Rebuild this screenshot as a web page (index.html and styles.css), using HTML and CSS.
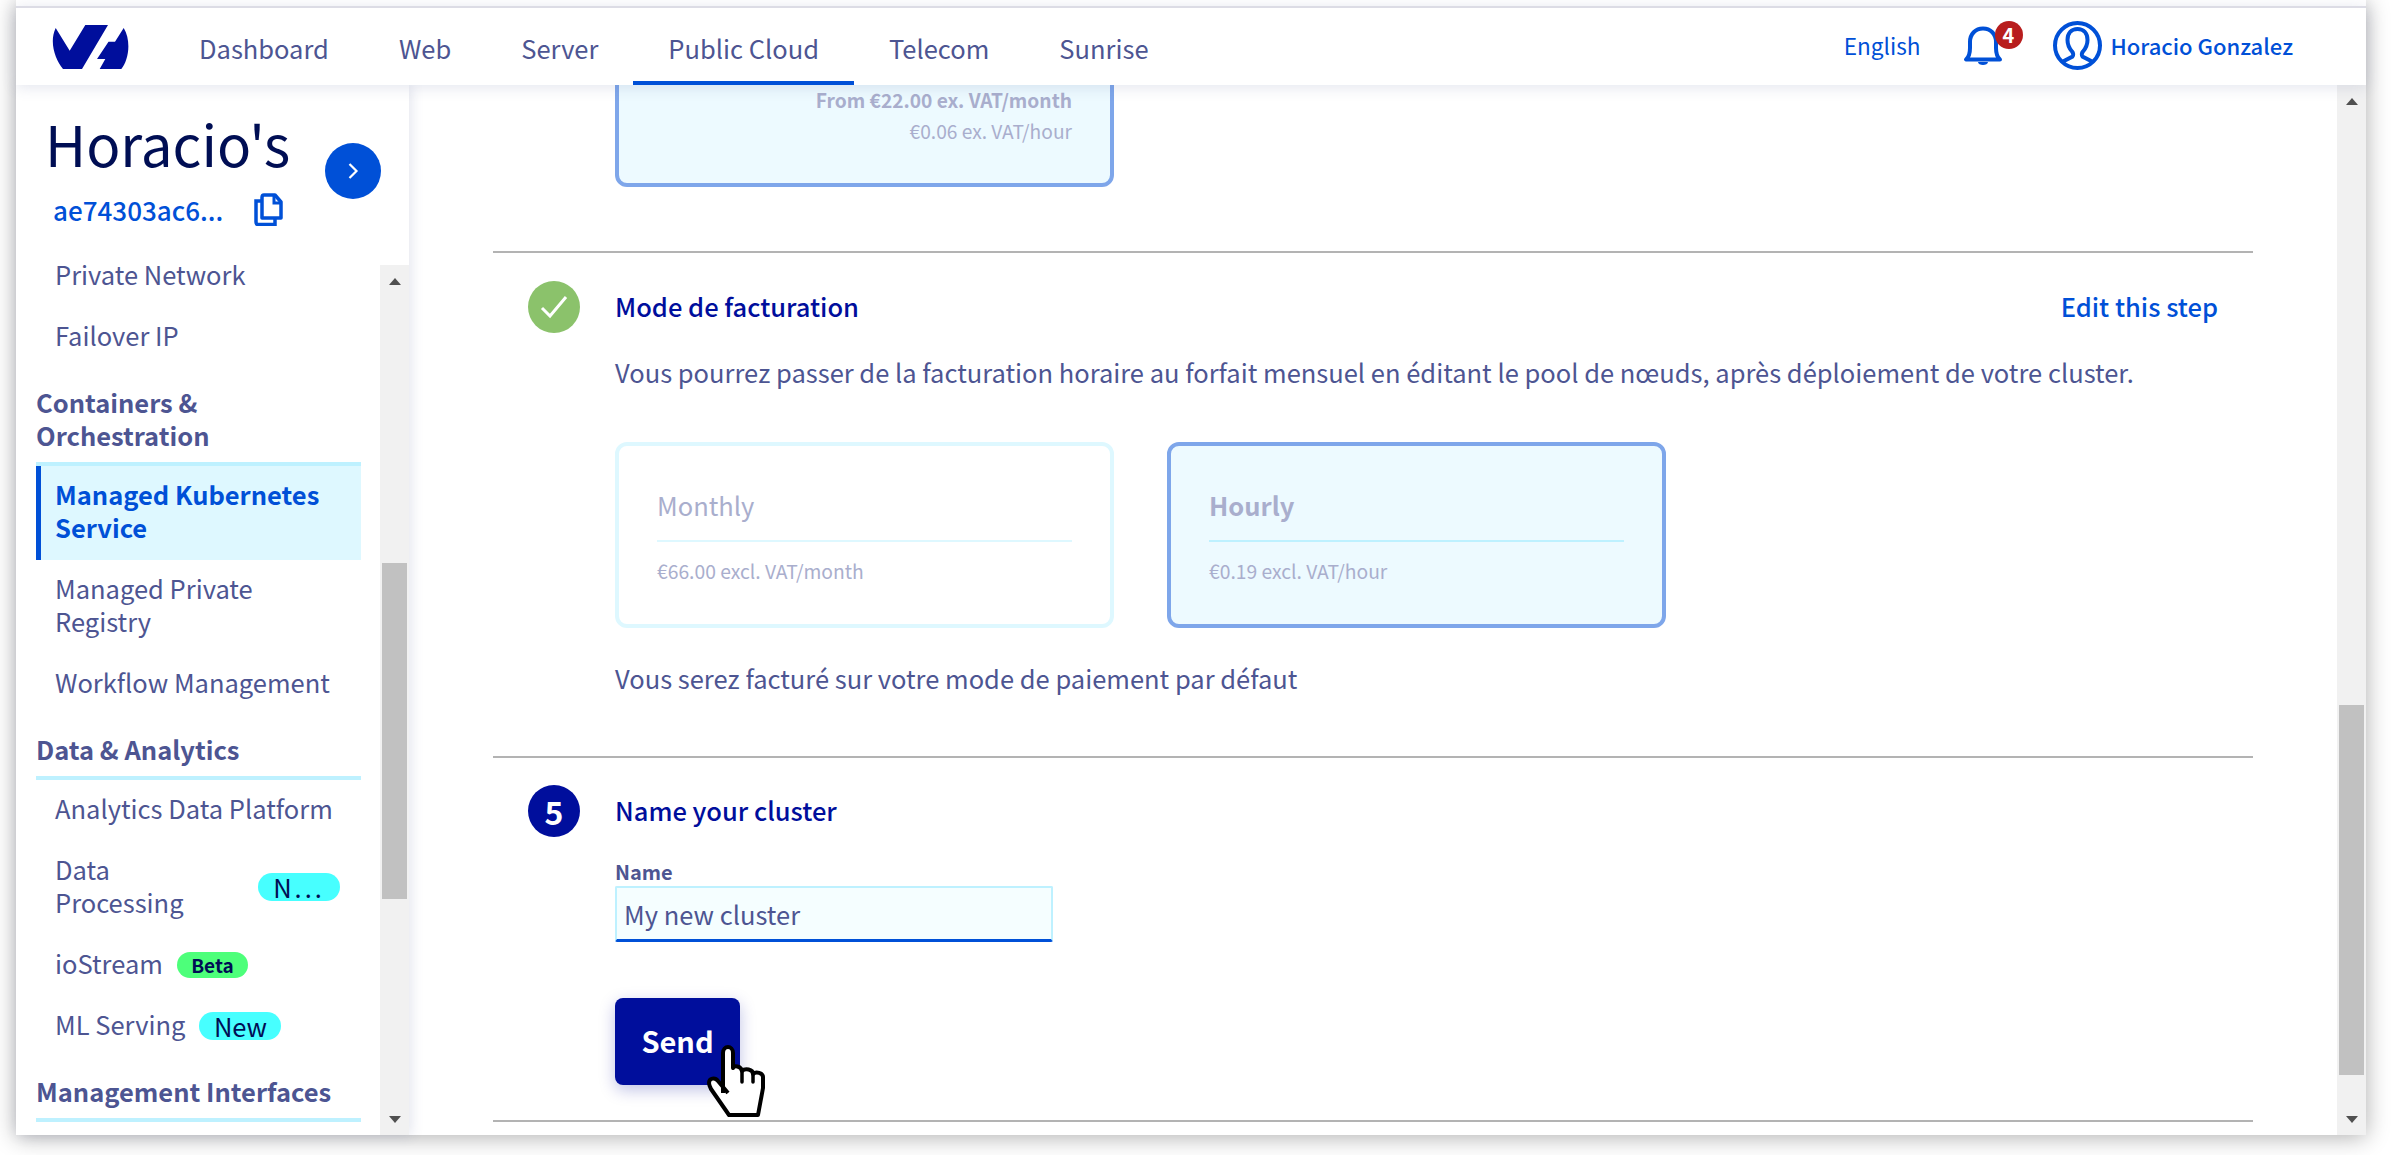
FILE: index.html
```html
<!DOCTYPE html>
<html lang="en">
<head>
    <meta charset="UTF-8">
    <meta name="viewport" content="width=device-width, initial-scale=1.0">
    <title>Public Cloud - Name your cluster</title>
    <link rel="stylesheet" href="styles.css">
</head>
<body>
    <div class="window">
        <nav class="topnav">
            <a class="logo" href="#">
                <svg width="77" height="44" viewBox="0 0 77 44"><path d="M3.7 3L17.7 25.7L33.3 0H56L30 44H11C3 34-3 17 3.7 3Z" fill="#000e9c"/><path d="M71.7 3L63 16.7H56.5L45 34H53.3L47.7 44H69.3C76 36 80 17 71.7 3Z" fill="#000e9c"/></svg>
            </a>
            <a class="nav-link" href="#">Dashboard</a>
            <a class="nav-link" href="#">Web</a>
            <a class="nav-link" href="#">Server</a>
            <a class="nav-link active" href="#">Public Cloud</a>
            <a class="nav-link" href="#">Telecom</a>
            <a class="nav-link" href="#">Sunrise</a>
            <div class="nav-right">
                <a class="lang" href="#">English</a>
                <a class="bell" href="#">
                    <svg width="40" height="40" viewBox="0 0 40 40"><path d="M3 33.5H37C34 31 33 28 33 22V16C33 8 27.500 2.500 20 2.500S7 8 7 16V22C7 28 6 31 3 33.500Z" fill="none" stroke="#0050d7" stroke-width="4" stroke-linejoin="round"/><path d="M15 36H25C25 40 15 40 15 36Z" fill="#0050d7"/></svg>
                    <span class="bell-count">4</span>
                </a>
                <a class="user" href="#">
                    <svg width="49" height="49" viewBox="0 0 49 49"><circle cx="24.500" cy="24.500" r="22.500" fill="none" stroke="#0050d7" stroke-width="4"/><path d="M9 41L19.500 35.500C20.500 34.500 20.500 32 19 30.500C16 27 14.500 23.500 14.500 19C14.500 12 18.500 8 24.500 8S34.500 12 34.500 19C34.500 23.500 33 27 30 30.500C28.500 32 28.500 34.500 29.500 35.500L40 41" fill="none" stroke="#0050d7" stroke-width="4"/></svg>
                    <span>Horacio Gonzalez</span>
                </a>
            </div>
        </nav>

        <div class="page">
            <aside class="sidebar">
                <div class="project">
                    <div class="project-info">
                        <h1>Horacio's</h1>
                        <div class="project-id">
                            <span>ae74303ac6...</span>
                            <svg width="30" height="33" viewBox="0 0 30 33"><path d="M8 4.500V25H27V9L21 2H10C9 2 8 3 8 4.500Z" fill="none" stroke="#0050d7" stroke-width="3.500" stroke-linejoin="round"/><path d="M20 2V10H27" fill="none" stroke="#0050d7" stroke-width="3"/><path d="M8 8H2V29C2 30.500 3 31.500 4 31.500H21V25" fill="none" stroke="#0050d7" stroke-width="3.500"/></svg>
                        </div>
                    </div>
                    <a class="project-toggle" href="#">
                        <svg width="14" height="20" viewBox="0 0 14 20"><path d="M3.500 3L10.500 10L3.500 17" fill="none" stroke="#fff" stroke-width="2.200"/></svg>
                    </a>
                </div>
                <div class="side-body">
                    <div class="side-menu">
                        <a class="side-item" href="#">Private Network</a>
                        <a class="side-item" href="#">Failover IP</a>
                        <h3 class="side-title">Containers &amp; Orchestration</h3>
                        <a class="side-item current" href="#">Managed Kubernetes Service</a>
                        <a class="side-item" href="#">Managed Private Registry</a>
                        <a class="side-item" href="#">Workflow Management</a>
                        <h3 class="side-title">Data &amp; Analytics</h3>
                        <a class="side-item" href="#">Analytics Data Platform</a>
                        <a class="side-item with-badge" href="#"><span class="wrap-name">Data Processing</span><span class="badge new wide">N...</span></a>
                        <a class="side-item with-badge" href="#"><span>ioStream</span><span class="badge beta">Beta</span></a>
                        <a class="side-item with-badge" href="#"><span>ML Serving</span><span class="badge new">New</span></a>
                        <h3 class="side-title">Management Interfaces</h3>
                    </div>
                    <div class="scrollbar">
                        <span class="arrow-up"></span>
                        <span class="thumb side-thumb"></span>
                        <span class="arrow-down"></span>
                    </div>
                </div>
            </aside>

            <main class="content">
                <div class="steps">
                    <div class="plan selected top-plan">
                        <p class="plan-strong">From €22.00 ex. VAT/month</p>
                        <p class="plan-small">€0.06 ex. VAT/hour</p>
                    </div>

                    <section class="step first-step">
                        <div class="step-head">
                            <span class="step-icon done">
                                <svg width="30" height="26" viewBox="0 0 30 26"><path d="M3 14L11 22L27 3" fill="none" stroke="#fff" stroke-width="3"/></svg>
                            </span>
                            <h2>Mode de facturation</h2>
                            <a class="edit" href="#">Edit this step</a>
                        </div>
                        <div class="step-body">
                            <p class="desc">Vous pourrez passer de la facturation horaire au forfait mensuel en éditant le pool de nœuds, après déploiement de votre cluster.</p>
                            <div class="plans">
                                <div class="plan">
                                    <h4>Monthly</h4>
                                    <p class="price">€66.00 excl. VAT/month</p>
                                </div>
                                <div class="plan selected">
                                    <h4>Hourly</h4>
                                    <p class="price">€0.19 excl. VAT/hour</p>
                                </div>
                            </div>
                            <p class="desc note">Vous serez facturé sur votre mode de paiement par défaut</p>
                        </div>
                    </section>

                    <section class="step last-step">
                        <div class="step-head">
                            <span class="step-icon num">5</span>
                            <h2>Name your cluster</h2>
                        </div>
                        <div class="step-body">
                            <label class="field-label" for="clusterName">Name</label>
                            <input class="field" id="clusterName" type="text" value="My new cluster">
                            <div class="send-wrap">
                                <button class="send">Send</button>
                                <svg class="hand" width="60" height="74" viewBox="0 0 60 74"><path d="M22 49L12 37C9 33 3 34 3 39C3 41 4 43 5 45L23 71H52L57 44V33C57 29 50 27 47 30C47 25 39 24 36 27C35 22 28 21 27 24V9C27 1 17 1 17 9V49" fill="#fff" stroke="#000" stroke-width="4" stroke-linejoin="round"/><path d="M36 27V38M47 30V38" fill="none" stroke="#000" stroke-width="3.500" stroke-linecap="round"/></svg>
                            </div>
                        </div>
                    </section>
                </div>
                <div class="scrollbar">
                    <span class="arrow-up"></span>
                    <span class="thumb main-thumb"></span>
                    <span class="arrow-down"></span>
                </div>
            </main>
        </div>
    </div>
</body>
</html>
```

FILE: styles.css
```css
* {
    box-sizing: border-box;
}
html, body {
    height: 100%;
}
body {
    margin: 0;
    background: #fff;
    font-family: "Noto Sans CJK SC", "Noto Sans", sans-serif;
    font-size: 25.5px;
    line-height: 33px;
    color: #4d5592;
    overflow: hidden;
}
a {
    text-decoration: none;
    color: inherit;
}
h1, h2, h3, h4, p {
    margin: 0;
    font-size: inherit;
    font-weight: 400;
}

.window {
    width: 2350px;
    height: 1135px;
    margin-left: 16px;
    padding-top: 6px;
    background: #fff;
    box-shadow: 0 2px 22px rgba(0, 0, 0, 0.32);
    display: flex;
    flex-direction: column;
}

/* top bar */
.topnav {
    position: relative;
    z-index: 3;
    flex: none;
    height: 79px;
    padding-left: 36px;
    border-top: 2px solid #dcdce5;
    background: #fff;
    box-shadow: 0 2px 14px rgba(77, 85, 146, 0.16);
    display: flex;
    align-items: stretch;
}
.logo {
    display: flex;
    align-items: center;
    margin-right: 35px;
}
.nav-link {
    padding: 5px 35px 0;
    border-bottom: 4px solid transparent;
    display: flex;
    align-items: center;
}
.nav-link.active {
    border-bottom-color: #0050d7;
}
.nav-right {
    margin-left: auto;
    padding: 0 73px 2px 0;
    display: flex;
    align-items: center;
    color: #0050d7;
    font-size: 22.600px;
}
.lang {
    margin-right: 42px;
}
.bell {
    position: relative;
    display: flex;
    margin-right: 50px;
}
.bell-count {
    position: absolute;
    top: -5px;
    left: 32px;
    width: 28px;
    height: 28px;
    border-radius: 50%;
    background: #b81d1d;
    color: #fff;
    font-size: 20px;
    font-weight: 700;
    line-height: 28px;
    text-align: center;
}
.user {
    display: flex;
    align-items: center;
    gap: 9px;
    font-size: 22px;
    font-weight: 500;
}

/* page */
.page {
    flex: 1;
    min-height: 0;
    display: flex;
}
.sidebar {
    position: relative;
    z-index: 2;
    flex: none;
    width: 393px;
    background: #fff;
    box-shadow: 2px 0 12px rgba(77, 85, 146, 0.16);
    display: flex;
    flex-direction: column;
}
.project {
    flex: none;
    height: 180px;
    padding: 17px 28px 0 29px;
    display: flex;
    justify-content: space-between;
}
.project h1 {
    font-size: 56.500px;
    line-height: 80px;
    color: #000e54;
}
.project-id {
    margin-top: 11px;
    padding-left: 8px;
    display: flex;
    align-items: center;
    gap: 31px;
    font-size: 26px;
    font-weight: 500;
    color: #0050d7;
}
.project-toggle {
    width: 56px;
    height: 56px;
    margin-top: 41px;
    border-radius: 50%;
    background: #0050d7;
    display: flex;
    align-items: center;
    justify-content: center;
}
.side-body {
    flex: 1;
    min-height: 0;
    display: flex;
    overflow: hidden;
}
.side-menu {
    flex: 1;
    min-width: 0;
    margin-top: -19px;
    padding: 0 19px 0 20px;
}
.side-item {
    display: block;
    padding: 11px 19px 17px;
}
.side-item.current {
    padding-left: 14px;
    border-left: 5px solid #0050d7;
    background: #def8ff;
    color: #0050d7;
    font-weight: 700;
}
.side-title {
    margin-top: 17px;
    padding-bottom: 11px;
    border-bottom: 4px solid #bef1ff;
    font-weight: 700;
}
.with-badge {
    display: flex;
    align-items: center;
    gap: 14px;
}
.wrap-name {
    width: 120px;
    margin-right: 69px;
}
.badge {
    height: 28px;
    margin-top: 4px;
    border-radius: 14px;
    line-height: 28px;
    text-align: center;
    color: #000e54;
}
.badge.new {
    width: 82px;
    background: #47ffff;
    font-size: 25.500px;
}
.badge.wide {
    letter-spacing: 3px;
}
.badge.beta {
    width: 71px;
    height: 26px;
    line-height: 26px;
    background: #4dff7a;
    font-size: 19px;
    font-weight: 700;
}

/* scrollbars */
.scrollbar {
    flex: none;
    width: 29px;
    padding: 13px 2px 12px;
    background: #f1f1f1;
    display: flex;
    flex-direction: column;
    align-items: center;
}
.arrow-up, .arrow-down {
    flex: none;
    width: 0;
    height: 0;
    border-left: 6.500px solid transparent;
    border-right: 6.500px solid transparent;
}
.arrow-up {
    border-bottom: 7px solid #505050;
}
.arrow-down {
    margin-top: auto;
    border-top: 7px solid #505050;
}
.thumb {
    flex: none;
    width: 100%;
    background: #c1c1c1;
}
.side-thumb {
    height: 336px;
    margin-top: 278px;
}
.main-thumb {
    height: 370px;
    margin-top: 600px;
}

/* main content */
.content {
    flex: 1;
    min-width: 0;
    display: flex;
    overflow: hidden;
}
.steps {
    flex: 1;
    min-width: 0;
    padding: 0 84px;
}
.plan {
    width: 499px;
    height: 186px;
    padding: 42px 38px 0;
    border: 4px solid #def8ff;
    border-radius: 12px;
    color: #a9aecd;
}
.plan.selected {
    border-color: #7ea6ea;
    background: #edfaff;
}
.plan.selected h4 {
    font-weight: 700;
}
.plan h4 {
    padding-bottom: 19px;
    border-bottom: 2px solid #def8ff;
}
.plan.selected h4 {
    border-bottom-color: #bef1ff;
}
.price {
    margin-top: 13px;
    font-size: 19.300px;
}
.top-plan {
    margin: -84px 0 0 122px;
    padding-top: 80px;
    text-align: right;
}
.plan-strong {
    font-size: 19.200px;
    line-height: 31px;
    font-weight: 700;
}
.plan-small {
    font-size: 19.200px;
    line-height: 31px;
}
.step {
    border-top: 2px solid #b3b3b3;
    padding: 28px 35px 0;
}
.first-step {
    margin-top: 64px;
    height: 505px;
}
.last-step {
    height: 366px;
    padding-top: 27px;
    border-bottom: 2px solid #b3b3b3;
}
.step-head {
    display: flex;
    align-items: center;
    gap: 35px;
}
.step-head h2 {
    margin-bottom: 4px;
    color: #000e9c;
    font-weight: 500;
}
.edit {
    margin: 0 0 4px auto;
    color: #0050d7;
    font-weight: 500;
}
.step-icon {
    flex: none;
    width: 52px;
    height: 52px;
    border-radius: 50%;
    display: flex;
    align-items: center;
    justify-content: center;
}
.done {
    background: #8bc26b;
}
.num {
    background: #000e9c;
    color: #fff;
    font-weight: 700;
    font-size: 32px;
}
.step-body {
    padding-left: 87px;
}
.desc {
    margin-top: 22px;
}
.plans {
    margin-top: 54px;
    display: flex;
    gap: 53px;
}
.note {
    margin-top: 33px;
}
.field-label {
    display: block;
    margin-top: 21px;
    font-size: 20px;
    line-height: 28px;
    font-weight: 700;
}
.field {
    display: block;
    width: 438px;
    height: 56px;
    padding: 0 7px;
    border: 2px solid #bef1ff;
    border-bottom: 3px solid #0050d7;
    border-radius: 2px;
    background: #f5feff;
    font: inherit;
    color: #4d5592;
}
.send-wrap {
    position: relative;
    width: 125px;
    margin-top: 56px;
}
.send {
    display: block;
    width: 125px;
    height: 87px;
    padding: 0 0 3px;
    border: none;
    border-radius: 8px;
    background: #000e9c;
    box-shadow: 0 5px 16px rgba(0, 14, 156, 0.25);
    color: #fff;
    font: inherit;
    font-size: 29px;
    font-weight: 700;
}
.hand {
    position: absolute;
    left: 91px;
    top: 46px;
}
```
